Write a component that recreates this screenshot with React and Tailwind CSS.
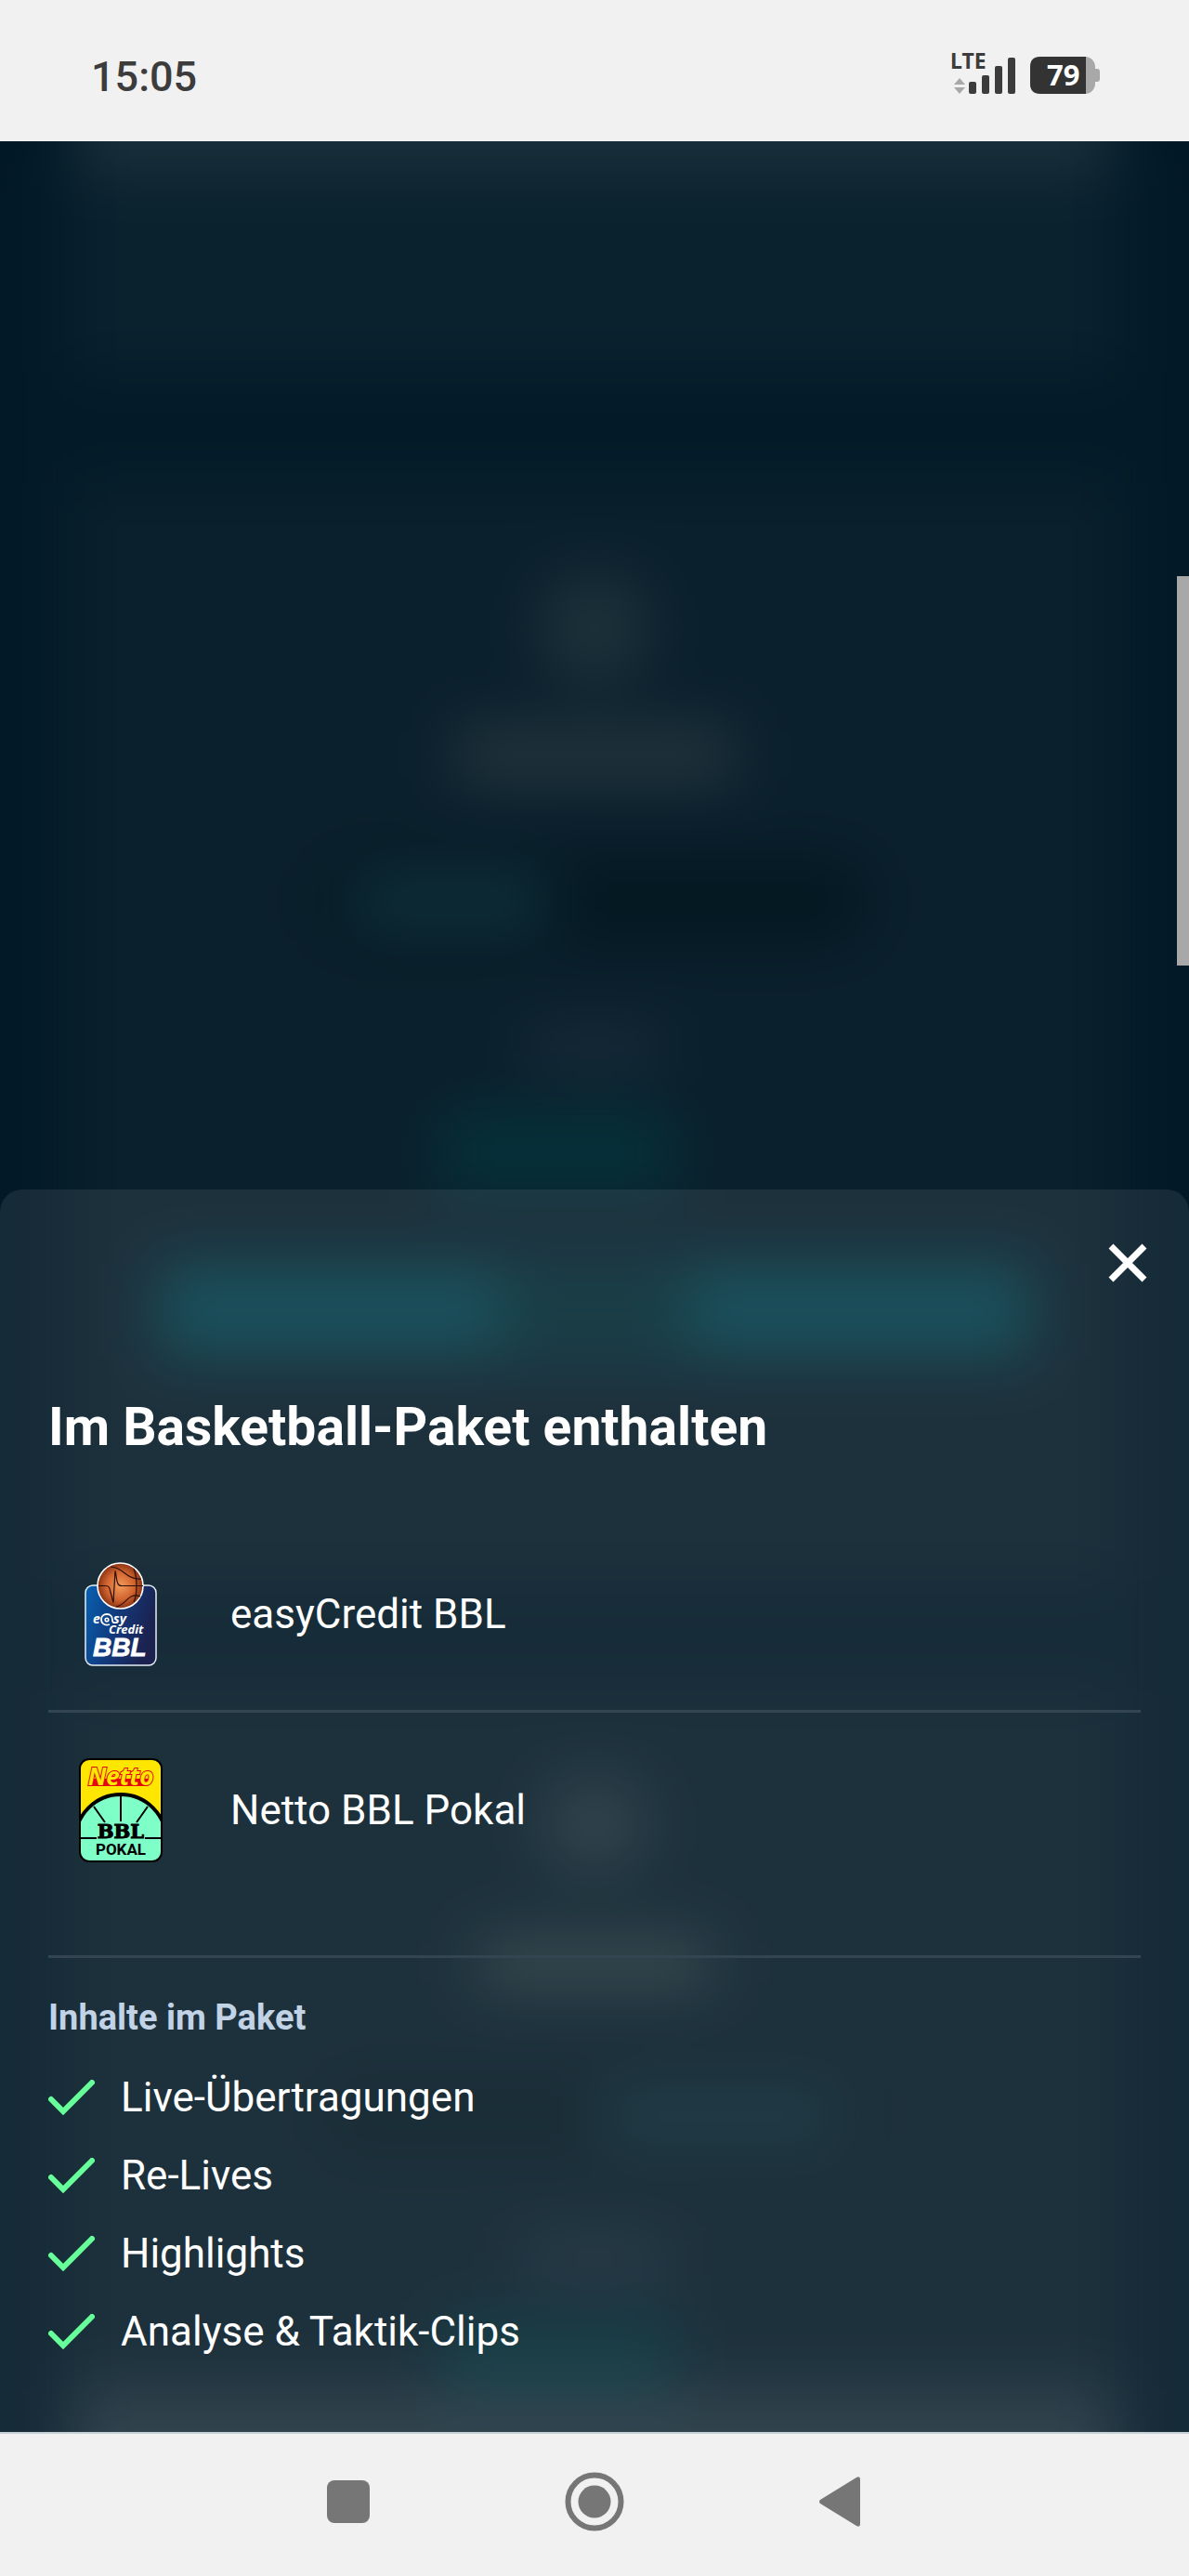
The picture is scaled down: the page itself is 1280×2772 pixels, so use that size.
import React from "react";

const leagues = [
    { name: "easyCredit BBL", Logo: EasyCreditLogo },
    { name: "Netto BBL Pokal", Logo: NettoPokalLogo },
];

const contents = [
    "Live-Übertragungen",
    "Re-Lives",
    "Highlights",
    "Analyse & Taktik-Clips",
];

function EasyCreditLogo() {
    return (
        <svg
            className="h-[112px] w-[78px]"
            viewBox="0 0 78 112"
            role="img"
            aria-label="easyCredit BBL Logo"
        >
            <defs>
                <linearGradient id="bblBlue" x1="0" y1="0" x2="1" y2="0.3">
                    <stop offset="0" stopColor="#0662b4" />
                    <stop offset="0.5" stopColor="#123a7d" />
                    <stop offset="1" stopColor="#1b2250" />
                </linearGradient>
                <radialGradient id="bblBall">
                    <stop offset="0" stopColor="#f29a5c" />
                    <stop offset="0.6" stopColor="#d2652f" />
                    <stop offset="1" stopColor="#8a3214" />
                </radialGradient>
            </defs>
            <rect
                x="1"
                y="25"
                width="76"
                height="86"
                rx="8"
                fill="url(#bblBlue)"
                stroke="#e8eef4"
                strokeWidth="1.5"
            />
            <circle cx="38.5" cy="25.5" r="24.5" fill="url(#bblBall)" stroke="#fff" strokeWidth="1.6" />
            <g fill="none" stroke="#2a1008" strokeWidth="1.2">
                <path d="M15 25.5h8c4 0 4 3 5 7l3 11 2-34c2 8 1 16 7 16h23" />
                <path d="M28 5c14 0 16 14 33 13" />
                <path d="M34 48c12-2 12-16 26-11" />
                <path d="M53 7c4 10 4 27 0 36" />
            </g>
            <g fill="#fff" fontWeight="bold" fontStyle="italic">
                <text x="9" y="66" fontSize="14" fontFamily="'Noto Sans', sans-serif">
                    e
                </text>
                <text x="31" y="66" fontSize="14" fontFamily="'Noto Sans', sans-serif">
                    sy
                </text>
                <text x="26" y="77" fontSize="13" fontFamily="'Noto Sans', sans-serif">
                    Credit
                </text>
                <text
                    x="9"
                    y="101"
                    fontSize="28"
                    fontFamily="'Liberation Sans', Arial, sans-serif"
                    stroke="#fff"
                    strokeWidth="0.8"
                >
                    BBL
                </text>
            </g>
            <path
                d="M27 67c-6 2-9-2-9-5 0-4 3-6 6-6 4 0 6 3 6 6 0 2 0 3 2 3"
                fill="none"
                stroke="#fff"
                strokeWidth="1.8"
            />
            <circle cx="24" cy="62" r="1.8" fill="none" stroke="#fff" strokeWidth="1.6" />
        </svg>
    );
}

function NettoPokalLogo() {
    return (
        <svg
            className="h-[112px] w-[90px]"
            viewBox="0 0 90 112"
            role="img"
            aria-label="Netto BBL Pokal Logo"
        >
            <defs>
                <clipPath id="pokalCard">
                    <rect x="1" y="1" width="88" height="110" rx="10" />
                </clipPath>
            </defs>
            <g clipPath="url(#pokalCard)">
                <rect width="90" height="112" fill="#ffe600" />
                <circle cx="45" cy="88" r="49" fill="#7fffc8" stroke="#000" strokeWidth="4" />
                <path
                    d="M45 40v28M16 52l12 17M74 52L62 69M0 86h19M71 86h19"
                    stroke="#000"
                    strokeWidth="2"
                />
            </g>
            <rect
                x="1"
                y="1"
                width="88"
                height="110"
                rx="10"
                fill="none"
                stroke="#000"
                strokeWidth="2"
            />
            <path d="M11 30l2-8h64l-3 8z" fill="#e30613" />
            <text
                x="45"
                y="29"
                textAnchor="middle"
                fontFamily="'Noto Sans', sans-serif"
                fontWeight="bold"
                fontStyle="italic"
                fontSize="26"
                fill="#ffe600"
                stroke="#e30613"
                strokeWidth="2"
                paintOrder="stroke"
            >
                Netto
            </text>
            <text
                x="45"
                y="86"
                textAnchor="middle"
                fontFamily="'DejaVu Serif', serif"
                fontWeight="bold"
                fontSize="21"
                stroke="#000"
                strokeWidth="1"
            >
                BBL
            </text>
            <text
                x="45"
                y="104"
                textAnchor="middle"
                fontFamily="Roboto, sans-serif"
                fontWeight="bold"
                fontSize="17"
            >
                POKAL
            </text>
        </svg>
    );
}

function StatusBar() {
    return (
        <header className="flex h-[152px] shrink-0 items-center justify-between bg-[#f1f1f1] px-24">
            <time className="pt-3 pl-[2px] text-[45px] leading-none font-medium text-[#3c3c3c]">
                15:05
            </time>
            <svg
                className="mt-2 h-16 w-[164px]"
                viewBox="0 -8 164 64"
                role="img"
                aria-label="LTE, Akku 79 Prozent"
            >
                <text
                    x="3"
                    y="18"
                    fontSize="23"
                    fontWeight="bold"
                    fontFamily="'Noto Sans', sans-serif"
                    fill="#3c3c3c"
                >
                    LTE
                </text>
                <path d="M7 35l6-7 6 7zM7 38h12l-6 7z" fill="#a8a8a8" />
                <g fill="#3c3c3c">
                    <rect x="23" y="32" width="8" height="13" rx="2" />
                    <rect x="37" y="25" width="8" height="20" rx="2" />
                    <rect x="51" y="15" width="8" height="30" rx="2" />
                    <rect x="65" y="6" width="8" height="39" rx="2" />
                </g>
                <rect x="89" y="5" width="70" height="40" rx="11" fill="#a8a8a8" />
                <path d="M157 18h4q3 0 3 3v8q0 3-3 3h-4z" fill="#a8a8a8" />
                <path d="M100 5h49v40h-49q-11 0-11-11V16q0-11 11-11z" fill="#333" />
                <text
                    x="107"
                    y="36"
                    fontSize="31"
                    fontWeight="bold"
                    fontFamily="'Noto Sans', sans-serif"
                    fill="#fff"
                >
                    79
                </text>
            </svg>
        </header>
    );
}

// Out-of-focus package page behind the sheet
function BlurredPage() {
    return (
        <div
            aria-hidden="true"
            className="absolute inset-0 overflow-hidden bg-[#001725]"
        >
            <div className="bg-[#031b28] blur-[32px]">
                <div className="flex flex-col gap-[120px] px-20">
                    <div className="-mt-12 h-[296px] border-t-[80px] border-[#1b323d] bg-[#0a212e]" />
                    <div className="flex h-[1180px] flex-col items-center bg-[#0a202c] pt-24">
                        <div className="h-[120px] w-[120px] rounded-full bg-[#1d313a]" />
                        <div className="mt-12 h-14 w-[300px] bg-[#26373f]" />
                        <div className="mt-20 flex h-[100px] w-[600px] items-center rounded-full bg-[#041822] px-10">
                            <div className="h-12 w-[210px] bg-[#12353f]" />
                        </div>
                        <div className="mt-[88px] h-10 w-[150px] bg-[#1b2d3c]" />
                        <div className="mt-[52px] mr-20 h-20 w-[250px] bg-[#05323b]" />
                        <div className="mt-20 flex h-[100px] w-[940px] items-center justify-center bg-[#07424f]">
                            <div className="h-20 w-[200px] bg-[#062c35]" />
                        </div>
                    </div>
                    <div className="flex h-[900px] flex-col items-center bg-[#0a202c] pt-[92px]">
                        <div className="h-[110px] w-[110px] rounded-full bg-[#21353e]" />
                        <div className="mt-[72px] h-14 w-[250px] bg-[#2b3b42]" />
                        <div className="mt-[92px] flex h-[100px] w-[600px] items-center justify-end rounded-full bg-[#071c27] px-10">
                            <div className="h-12 w-[250px] bg-[#0f303b]" />
                        </div>
                        <div className="mt-[88px] h-10 w-[150px] bg-[#1c303d]" />
                        <div className="mt-12 mr-20 h-20 w-[250px] bg-[#053039]" />
                        <div className="h-40 w-full bg-[#20343f]" />
                    </div>
                </div>
            </div>
            <div className="absolute top-[468px] right-0 h-[419px] w-[13px] bg-[#a8a8a8]" />
        </div>
    );
}

function PackageSheet() {
    return (
        <section className="relative rounded-t-[24px] bg-white/8 pb-[66px] text-white">
            <div className="flex h-[158px] items-center justify-end pr-6">
                <button
                    type="button"
                    aria-label="Schließen"
                    className="flex h-[84px] w-[84px] items-center justify-center"
                >
                    <svg className="h-[42px] w-[42px]" viewBox="0 0 42 42">
                        <path d="M3 3l36 36M39 3L3 39" stroke="#fff" strokeWidth="7" />
                    </svg>
                </button>
            </div>
            <div className="px-[52px]">
                <h1 className="mt-14 text-[57px] leading-[84px] font-bold">
                    Im Basketball-Paket enthalten
                </h1>
                <ul className="mt-[55px] divide-y-3 divide-[#324550] border-b-3 border-[#324550] pb-[51px]">
                    {leagues.map(({ name, Logo }) => (
                        <li key={name} className="flex h-[210px] items-center">
                            <div className="flex w-[156px] justify-center">
                                <Logo />
                            </div>
                            <span className="pl-10 text-[44px] leading-[84px]">
                                {name}
                            </span>
                        </li>
                    ))}
                </ul>
                <h2 className="mt-9 text-[38px] leading-[56px] font-bold text-[#c2d3e6]">
                    Inhalte im Paket
                </h2>
                <ul className="mt-4">
                    {contents.map((item) => (
                        <li
                            key={item}
                            className="flex items-center gap-7 text-[44px] leading-[84px]"
                        >
                            <svg className="h-[38px] w-[50px]" viewBox="0 0 50 38" fill="none">
                                <path
                                    d="M3 21l13 13L47 3"
                                    stroke="#66ff99"
                                    strokeWidth="6"
                                    strokeLinecap="round"
                                />
                            </svg>
                            {item}
                        </li>
                    ))}
                </ul>
            </div>
        </section>
    );
}

function NavigationBar() {
    return (
        <nav className="flex h-[155px] shrink-0 items-center justify-center gap-[185px] border-t-2 border-[#c5d0d5] bg-[#f1f1f1] pb-2">
            <button type="button" aria-label="Letzte Apps" className="p-2">
                <svg className="h-16 w-16" viewBox="0 0 64 64" fill="#767676">
                    <rect x="9" y="9" width="46" height="46" rx="8" />
                </svg>
            </button>
            <button type="button" aria-label="Startseite" className="p-2">
                <svg className="h-16 w-16" viewBox="0 0 64 64" fill="#767676">
                    <circle cx="32" cy="32" r="28.5" fill="none" stroke="#767676" strokeWidth="6" />
                    <circle cx="32" cy="32" r="17.5" />
                </svg>
            </button>
            <button type="button" aria-label="Zurück" className="p-2">
                <svg className="h-16 w-16" viewBox="0 0 64 64" fill="#767676">
                    <path d="M10 30L49 6q4-2 4 2v48q0 4-4 2L10 34q-2-2 0-4z" />
                </svg>
            </button>
        </nav>
    );
}

export default function App() {
    return (
        <div className="flex min-h-screen flex-col font-[Roboto,sans-serif]">
            <StatusBar />
            <main className="relative flex flex-1 flex-col justify-end">
                <BlurredPage />
                <PackageSheet />
            </main>
            <NavigationBar />
        </div>
    );
}
